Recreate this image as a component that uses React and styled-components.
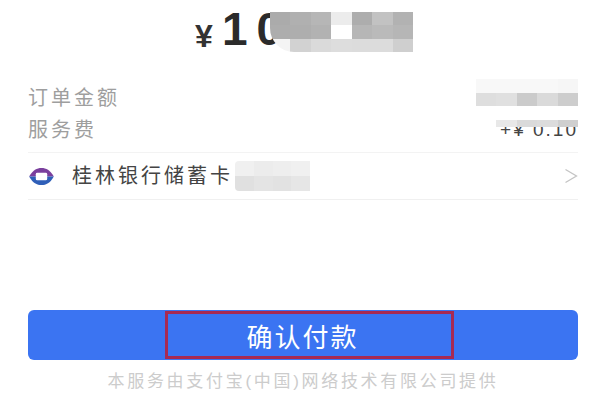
import React from 'react';
import styled, { createGlobalStyle } from 'styled-components';

const GlobalStyle = createGlobalStyle`
    html, body {
        margin: 0;
        padding: 0;
        background: #fff;
    }
    body {
        font-family: "Liberation Sans", "Noto Sans CJK SC", sans-serif;
    }
`;

const amountTiles = [
    "#ababab", "#b0b0b0", "#b6b6b6", "#ececec", "#adadad", "#c2c2c2", "#b2b2b2",
    "#adadad", "#aeaeae", "#b2b2b2", "#ffffff", "#b6b6b6", "#bababa", "#b6b6b6",
    "#f4f4f4", "#d2d2d2", "#dadada", "#dddddd", "#dcdcdc", "#dcdcdc", "#cfcfcf"
];
const orderTiles = ["#f8f8f8", "#f8f8f8", "#f8f8f8", "#f8f8f8", "#f6f6f6", "#dedede", "#e0e0e0", "#cbcbcb", "#dadada", "#cdcdcd"];
const feeTiles = ["#e8e8e8", "#dadada", "#dcdcdc", "#cfcfcf"];
const cardTiles = ["#f0f0f0", "#ececec", "#eeeeee", "#f0f0f0", "#e0e0e0", "#e4e4e4", "#e2e2e2", "#e6e6e6"];

export default function App() {
    return (
        <Page>
            <GlobalStyle />
            <Amount>
                <Yen>¥</Yen>
                <Digits>10</Digits>
                <AmountMosaic>
                    {amountTiles.map((c, i) => <Tile key={i} color={c} />)}
                </AmountMosaic>
            </Amount>
            <Details>
                <Row>
                    <Label>订单金额</Label>
                    <OrderMosaic>
                        {orderTiles.map((c, i) => <Tile key={i} color={c} />)}
                    </OrderMosaic>
                </Row>
                <Row>
                    <Label>服务费</Label>
                    <FeeValue>
                        <FeeText>+¥ 0.10</FeeText>
                        <FeeMosaic>
                            {feeTiles.map((c, i) => <Tile key={i} color={c} />)}
                        </FeeMosaic>
                    </FeeValue>
                </Row>
            </Details>
            <BankRow>
                <BankLogo viewBox="0 0 28 20">
                    <path d="M1 10C5 3 9 1 14 1s9 2 13 9H1z" fill="#7a3f9d" />
                    <path d="M1 10c4 7 8 9 13 9s9-2 13-9H1z" fill="#2f5fb8" />
                    <rect x="8" y="6" width="12" height="8" rx="1.5" fill="#fff" />
                </BankLogo>
                <BankName>桂林银行储蓄卡</BankName>
                <CardMosaic>
                    {cardTiles.map((c, i) => <Tile key={i} color={c} />)}
                </CardMosaic>
                <Chevron viewBox="0 0 14 16">
                    <path d="M1.5 1.5L12.5 8L1.5 14.5" />
                </Chevron>
            </BankRow>
            <PayButton>
                <PayLabel>确认付款</PayLabel>
            </PayButton>
            <Footer>本服务由支付宝(中国)网络技术有限公司提供</Footer>
        </Page>
    );
}

const Page = styled('div')`
    width: 600px;
    height: 420px;
    overflow: hidden;
    background: #fff;
    padding: 0 22px 0 28px;
    box-sizing: border-box;
`;

const Amount = styled('div')`
    position: relative;
    height: 80px;
    padding-left: 167px;
    display: flex;
    align-items: flex-start;
`;

const Yen = styled('span')`
    font-size: 32px;
    font-weight: 700;
    color: #333;
    line-height: 32px;
    margin-top: 20px;
    width: 27px;
`;

const Digits = styled('span')`
    font-size: 46px;
    font-weight: 700;
    color: #2b2b2b;
    line-height: 46px;
    margin-top: 6px;
    letter-spacing: 9px;
`;

const Mosaic = styled('div')`
    position: absolute;
    display: grid;
    overflow: hidden;
`;

const AmountMosaic = styled(Mosaic)`
    left: 242px;
    top: 12px;
    width: 143px;
    height: 40px;
    grid-template-columns: repeat(7, 1fr);
    grid-template-rows: repeat(3, 1fr);
    border-radius: 0 0 0 24px;
`;

const Tile = styled('div')`
    background: ${props => props.color};
`;

const Details = styled('div')`
    display: flex;
    flex-direction: column;
    padding-bottom: 8px;
`;

const Row = styled('div')`
    position: relative;
    height: 32px;
    display: flex;
    align-items: center;
    justify-content: space-between;
`;

const Label = styled('span')`
    font-size: 20px;
    letter-spacing: 3px;
    color: #9e9e9e;
`;

const OrderMosaic = styled(Mosaic)`
    right: 0;
    top: -1px;
    width: 102px;
    height: 27px;
    grid-template-columns: repeat(5, 1fr);
    grid-template-rows: repeat(2, 1fr);
`;

const FeeValue = styled('div')`
    position: relative;
    height: 16px;
    width: 82px;
`;

const FeeText = styled('span')`
    position: absolute;
    right: 0;
    top: 0;
    font-size: 19px;
    line-height: 20px;
    letter-spacing: 2px;
    color: #444;
    white-space: nowrap;
`;

const FeeMosaic = styled(Mosaic)`
    left: 0;
    top: 0;
    width: 82px;
    height: 7px;
    grid-template-columns: repeat(4, 1fr);
`;

const BankRow = styled('div')`
    position: relative;
    height: 46px;
    border-top: 1px solid #f3f3f3;
    border-bottom: 1px solid #f0f0f0;
    display: flex;
    align-items: center;
`;

const BankLogo = styled('svg')`
    width: 27px;
    height: 19px;
    flex: none;
`;

const BankName = styled('span')`
    margin-left: 17px;
    padding-bottom: 3px;
    font-size: 20px;
    letter-spacing: 3px;
    color: #444;
`;

const CardMosaic = styled('div')`
    width: 75px;
    height: 30px;
    margin-left: 2px;
    display: grid;
    grid-template-columns: repeat(4, 1fr);
    grid-template-rows: repeat(2, 1fr);
    border-radius: 4px 0 0 4px;
    overflow: hidden;
`;

const Chevron = styled('svg')`
    width: 14px;
    height: 16px;
    margin-left: auto;
    fill: none;
    stroke: #c4c4c4;
    stroke-width: 1.3;
`;

const PayButton = styled('div')`
    margin-top: 110px;
    width: 550px;
    height: 50px;
    background: #3b74f2;
    border-radius: 6px;
    display: flex;
    justify-content: center;
    padding: 1px 0;
    box-sizing: border-box;
`;

const PayLabel = styled('div')`
    width: 289px;
    margin-left: 12px;
    padding-right: 13px;
    box-sizing: border-box;
    border: 3px solid #a82a52;
    display: flex;
    align-items: center;
    justify-content: center;
    color: #fff;
    font-size: 26px;
    letter-spacing: 2px;
`;

const Footer = styled('div')`
    margin-top: 7px;
    width: 550px;
    text-align: center;
    font-size: 17px;
    letter-spacing: 2.7px;
    color: #cccccc;
`;
